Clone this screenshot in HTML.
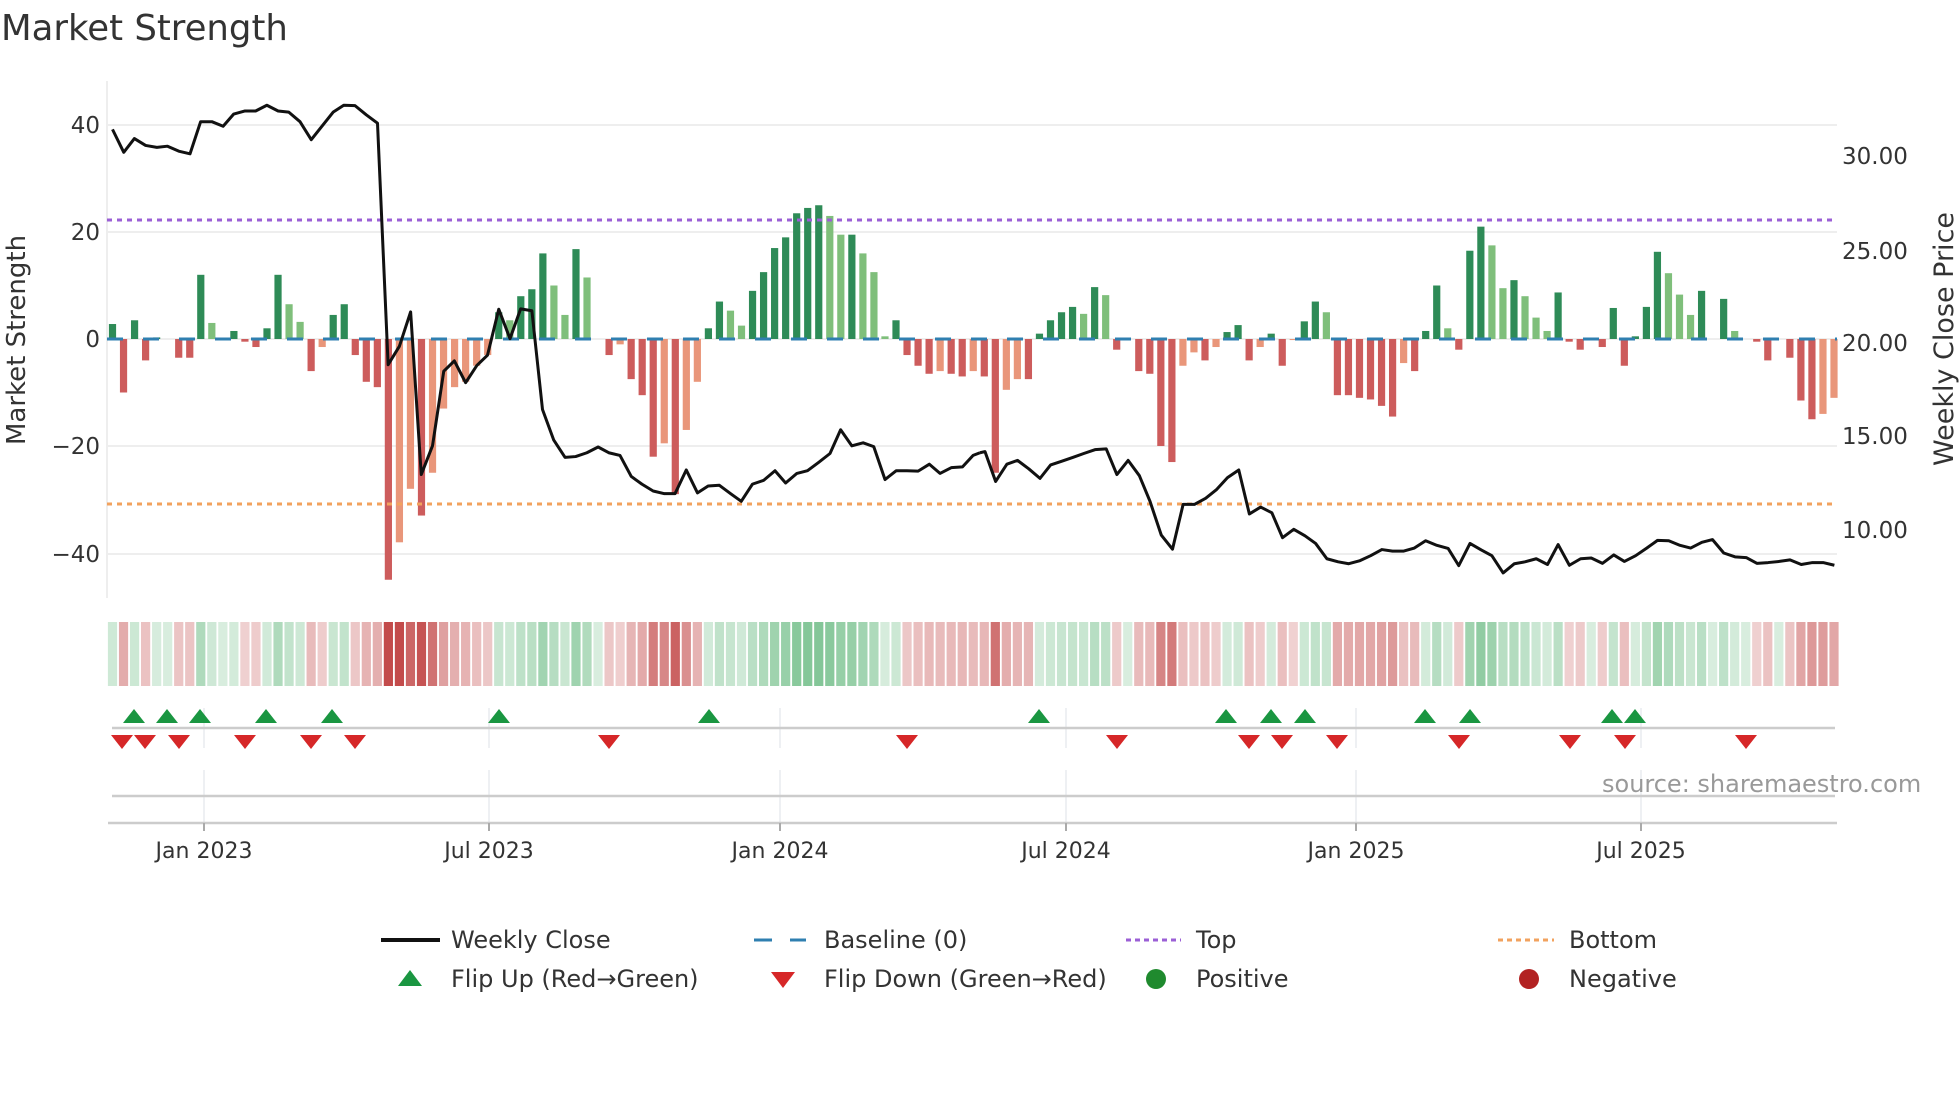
<!DOCTYPE html>
<html><head><meta charset="utf-8"><style>
html,body{margin:0;padding:0;background:#fff;width:1960px;height:1102px;overflow:hidden}
svg{display:block;font-family:"DejaVu Sans","Liberation Sans",sans-serif}
</style></head><body>
<svg id="s" width="1960" height="1102" viewBox="0 0 1960 1102" xmlns="http://www.w3.org/2000/svg">
<text x="1" y="40" font-size="35.5" fill="#333">Market Strength</text>
<g stroke="#eee" stroke-width="2">
<line x1="107" y1="125" x2="1837" y2="125"/><line x1="107" y1="232" x2="1837" y2="232"/>
<line x1="107" y1="446" x2="1837" y2="446"/><line x1="107" y1="554" x2="1837" y2="554"/>
<line x1="107" y1="339" x2="1837" y2="339"/>
<line x1="107" y1="81" x2="107" y2="598"/>
</g>
<g font-size="23" fill="#333" text-anchor="end">
<text x="100" y="133">40</text><text x="100" y="240">20</text><text x="100" y="347">0</text>
<text x="100" y="454">−20</text><text x="100" y="562">−40</text>
</g>
<g font-size="23" fill="#333">
<text x="1842" y="164">30.00</text><text x="1842" y="259">25.00</text><text x="1842" y="351">20.00</text>
<text x="1842" y="444">15.00</text><text x="1842" y="538">10.00</text>
</g>
<text transform="translate(25,340) rotate(-90)" font-size="26" fill="#333" text-anchor="middle">Market Strength</text>
<text transform="translate(1953,339) rotate(-90)" font-size="27" fill="#333" text-anchor="middle">Weekly Close Price</text>
<g id="bars"></g>
<line x1="107" y1="339" x2="1837" y2="339" stroke="#2f7fb0" stroke-width="3" stroke-dasharray="16 20"/>
<line x1="107" y1="220" x2="1837" y2="220" stroke="#9b5fd6" stroke-width="3" stroke-dasharray="5 5"/>
<line x1="107" y1="504" x2="1837" y2="504" stroke="#f2a25e" stroke-width="3" stroke-dasharray="5 5"/>
<g fill="none" stroke="#111" stroke-width="3" stroke-linejoin="round">
<polyline vector-effect="non-scaling-stroke" transform="scale(0.625,0.3827)" points="180,338 198,398 215,362 233,380 251,385 268,382 286,395 304,402 321,318 339,318 357,330 374,298 392,290 409,290 427,275 445,290 462,293 480,318 498,365 515,330 533,293 550,275 568,276 586,300 604,322 621,953 639,905 657,815 674,1240 692,1165 710,970 727,943 745,1000 763,955 780,928 798,808 816,885 833,807 851,812 868,1070 886,1150 904,1195 921,1193 939,1183 957,1168 974,1183 992,1190 1010,1245 1027,1265 1045,1283 1063,1290 1080,1290 1098,1228 1116,1288 1133,1270 1151,1268 1169,1290 1186,1310 1204,1265 1222,1255 1240,1230 1257,1262 1275,1237 1292,1230 1310,1208 1328,1185 1345,1123 1363,1165 1381,1157 1398,1167 1416,1253 1434,1230 1451,1230 1469,1231 1487,1213 1504,1237 1522,1222 1540,1220 1557,1190 1568,1183"/>
<polyline vector-effect="non-scaling-stroke" transform="translate(980,0) scale(0.625,0.3827)" points="0,1183 8,1180 25,1258 43,1213 60,1203 78,1225 96,1250 113,1215 131,1205 149,1195 166,1185 184,1175 202,1173 219,1240 237,1203 255,1243 272,1310 290,1398 308,1435 325,1318 343,1318 361,1302 378,1280 396,1248 414,1228 431,1343 449,1325 467,1340 484,1405 502,1383 520,1400 537,1420 555,1460 573,1468 590,1473 608,1465 625,1452 643,1436 660,1440 678,1440 695,1432 713,1413 731,1425 749,1433 766,1478 784,1420 802,1437 819,1452 837,1497 855,1473 872,1468 890,1460 908,1475 925,1423 943,1477 961,1460 978,1458 996,1472 1014,1450 1031,1467 1049,1452 1067,1432 1084,1412 1102,1413 1120,1425 1137,1432 1155,1417 1172,1410 1190,1445 1208,1455 1226,1457 1243,1472 1261,1470 1279,1467 1296,1463 1314,1475 1332,1470 1349,1470 1367,1477"/>
</g>
<g id="strip"></g>
<g stroke="#eef0f3" stroke-width="2">
<line x1="204" y1="708" x2="204" y2="748"/><line x1="489" y1="708" x2="489" y2="748"/><line x1="780" y1="708" x2="780" y2="748"/><line x1="1066" y1="708" x2="1066" y2="748"/><line x1="1356" y1="708" x2="1356" y2="748"/><line x1="1641" y1="708" x2="1641" y2="748"/>
<line x1="204" y1="770" x2="204" y2="823"/><line x1="489" y1="770" x2="489" y2="823"/><line x1="780" y1="770" x2="780" y2="823"/><line x1="1066" y1="770" x2="1066" y2="823"/><line x1="1356" y1="770" x2="1356" y2="823"/><line x1="1641" y1="770" x2="1641" y2="823"/>
</g>
<line x1="112" y1="728" x2="1835" y2="728" stroke="#ccc" stroke-width="2.5"/>
<line x1="112" y1="796" x2="1835" y2="796" stroke="#ccc" stroke-width="2.5"/>
<line x1="108" y1="823" x2="1837" y2="823" stroke="#ccc" stroke-width="2.5"/>
<g stroke="#aaa" stroke-width="2">
<line x1="204" y1="823" x2="204" y2="831"/><line x1="489" y1="823" x2="489" y2="831"/><line x1="780" y1="823" x2="780" y2="831"/><line x1="1066" y1="823" x2="1066" y2="831"/><line x1="1356" y1="823" x2="1356" y2="831"/><line x1="1641" y1="823" x2="1641" y2="831"/>
</g>
<g id="marks"></g>
<g font-size="22" fill="#333" text-anchor="middle">
<text x="204" y="858">Jan 2023</text><text x="489" y="858">Jul 2023</text><text x="780" y="858">Jan 2024</text>
<text x="1066" y="858">Jul 2024</text><text x="1356" y="858">Jan 2025</text><text x="1641" y="858">Jul 2025</text>
</g>
<text x="1602" y="792" font-size="24" fill="#999">source: sharemaestro.com</text>
<g font-size="24" fill="#333">
<line x1="381" y1="940" x2="440" y2="940" stroke="#111" stroke-width="4"/>
<text x="451" y="948">Weekly Close</text>
<line x1="754" y1="940" x2="772" y2="940" stroke="#2f7fb0" stroke-width="3"/><line x1="790" y1="940" x2="806" y2="940" stroke="#2f7fb0" stroke-width="3"/>
<text x="824" y="948">Baseline (0)</text>
<line x1="1126" y1="940" x2="1181" y2="940" stroke="#9b5fd6" stroke-width="3" stroke-dasharray="5 4"/>
<text x="1196" y="948">Top</text>
<line x1="1498" y1="940" x2="1554" y2="940" stroke="#f2a25e" stroke-width="3" stroke-dasharray="5 4"/>
<text x="1569" y="948">Bottom</text>
<polygon points="398,986 422,986 410,970" fill="#1a9641"/>
<text x="451" y="987">Flip Up (Red→Green)</text>
<polygon points="771,972 795,972 783,988" fill="#d62728"/>
<text x="824" y="987">Flip Down (Green→Red)</text>
<circle cx="1156" cy="979" r="10" fill="#1f8a2e"/>
<text x="1196" y="987">Positive</text>
<circle cx="1529" cy="979" r="10" fill="#b22222"/>
<text x="1569" y="987">Negative</text>
</g>
</svg>
<script>
var V=[2.8,-10,3.5,-4,0.3,0,-3.5,-3.5,12,3,0,1.5,-0.5,-1.5,2,12,6.5,3.2,-6,-1.5,4.5,6.5,-3,-8,-9,-45,-38,-28,-33,-25,-13,-9,-8,-5,-3,5,3.5,8,9.3,16,10,4.5,16.8,11.5,0,-3,-1,-7.5,-10.5,-22,-19.5,-29,-17,-8,2,7,5.3,2.5,9,12.5,17,19,23.5,24.5,25,23,19.5,19.5,16,12.5,0.5,3.5,-3,-5,-6.5,-6,-6.5,-7,-6,
-7,-25,-9.5,-7.5,-7.5,1,3.5,5,6,4.7,9.7,8.2,-2,0,-6,-6.5,-20,-23,-5,-2.5,-4,-1.5,1.3,2.6,-4,-1.5,1,-5,-0.2,3.3,7,5,-10.5,-10.5,-11,-11.3,-12.5,-14.5,-4.5,-6,1.5,10,2,-2,16.5,21,17.5,9.5,11,8,4,1.5,8.7,-0.5,-2,0,-1.5,5.8,-5,0.5,6,16.3,12.3,8.3,4.5,9,0,7.5,1.5,0,-0.5,-4,0,-3.5,-11.5,-15,-14,-11];
var ns="http://www.w3.org/2000/svg";
function el(p,t,a){var e=document.createElementNS(ns,t);for(var k in a)e.setAttribute(k,a[k]);p.appendChild(e);return e;}
var bars=document.getElementById('bars'),strip=document.getElementById('strip'),marks=document.getElementById('marks');
var N=V.length;
for(var i=0;i<N;i++){
 var x=112.5+i*(1834-112.5)/(N-1),v=V[i],prev=i>0?V[i-1]:0;
 var inc=Math.abs(v)>=Math.abs(prev)||(v>0)!=(prev>0);
 var col=v>=0?(inc?'#2e8b57':'#7fbf7b'):(inc?'#cd5c5c':'#e9967a');
 var h=Math.abs(v)*5.35;
 if(h>0.3) el(bars,'rect',{x:x-3.6,y:v>=0?339-h:339,width:7.2,height:h,fill:col});
 var a=0.25+0.75*Math.min(1,Math.abs(v)/35);
 var c=v>=0?'rgba(70,170,100,'+(a*0.85)+')':'rgba(195,75,75,'+a+')';
 el(strip,'rect',{x:x-4.6,y:622,width:9.2,height:64,fill:c});
}
var up=[134,167,200,266,332,499,709,1039,1226,1271,1305,1425,1470,1612,1635];
var dn=[122,145,179,245,311,355,609,907,1117,1249,1282,1337,1459,1570,1625,1746];
up.forEach(function(x){el(marks,'polygon',{points:(x-11)+',723 '+(x+11)+',723 '+x+',709',fill:'#1a9641'});});
dn.forEach(function(x){el(marks,'polygon',{points:(x-11)+',735 '+(x+11)+',735 '+x+',749',fill:'#d62728'});});
</script>
</body></html>
